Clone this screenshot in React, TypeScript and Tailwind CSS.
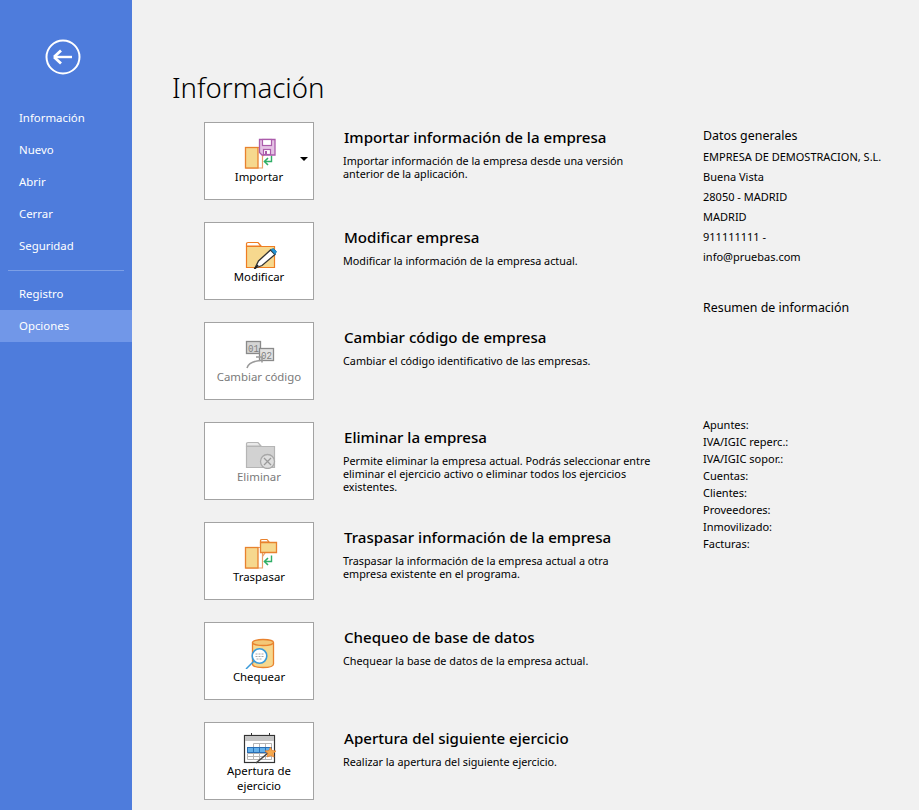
const FONT = "font-['Noto_Sans','Open_Sans',sans-serif]";

function BackIcon() {
  return (
    <svg width="36" height="36" viewBox="0 0 36 36" fill="none">
      <circle cx="18" cy="18" r="16.5" stroke="white" strokeWidth="2" />
      <path d="M10 18H27" stroke="white" strokeWidth="2.4" />
      <path d="M9 18L16 11.5M9 18L16 24.5" stroke="white" strokeWidth="2.8" />
    </svg>
  );
}

function DocBack() {
  return (
    <>
      <path d="M22.5 10.5H27.5V19.5L31 14.5M27.5 19.5V31H10.5" fill="none" stroke="#e8a06a" strokeWidth="1.2" />
      <rect x="10.5" y="10.5" width="12.5" height="20.5" fill="#f6d88e" stroke="#e8822e" strokeWidth="1.3" />
      <path d="M36.5 18.5V24.5H29.5" fill="none" stroke="#2fae66" strokeWidth="1.4" />
      <path d="M33 21L29.5 24.5L33 28" fill="none" stroke="#2fae66" strokeWidth="1.6" />
    </>
  );
}

function ImportIcon() {
  return (
    <svg width="48" height="32" viewBox="0 0 48 32">
      <DocBack />
      <path d="M24.5 2.5H40V18H27L24.5 15.5Z" fill="#e4c2e4" stroke="#ab5cab" strokeWidth="1.3" />
      <rect x="27.5" y="2.5" width="9" height="6" fill="white" stroke="#ab5cab" strokeWidth="1.2" />
      <rect x="28.5" y="12.5" width="7" height="5" fill="white" stroke="#ab5cab" strokeWidth="1.2" />
      <rect x="30" y="14" width="2" height="3" fill="#ab5cab" />
    </svg>
  );
}

function ModifyIcon() {
  return (
    <svg width="48" height="32" viewBox="0 0 48 32">
      <path d="M11.5 9V6.5Q11.5 5.5 13 5.5H23L26 9Z" fill="white" stroke="#ef7d22" strokeWidth="1.2" />
      <path d="M11.5 9.5H39.5V30.5H11.5Z" fill="#f6d88e" stroke="#ef7d22" strokeWidth="1.2" />
      <path d="M20 31L23.5 24L35.5 13L40 17.5L27 28.5Z" fill="white" stroke="#333" strokeWidth="1.3" />
      <path d="M36 12.5L38.5 11.5L41.5 14.5L40 17.5Z" fill="#1f93d6" stroke="#1876ad" strokeWidth="0.8" />
      <path d="M19.5 32L23 28" stroke="#222" strokeWidth="1.6" />
    </svg>
  );
}

function CodeIcon() {
  return (
    <svg width="48" height="32" viewBox="0 0 48 32">
      <rect x="11.5" y="4.5" width="14" height="12" fill="#d5d5d5" stroke="#8a8a8a" strokeWidth="1.3" />
      <rect x="24.5" y="11.5" width="14" height="12" fill="#e2e2e2" stroke="#8a8a8a" strokeWidth="1.3" />
      <text x="13" y="14.5" fontSize="11" fontFamily="Liberation Mono, monospace" fill="#7f7f7f" textLength="11" lengthAdjust="spacingAndGlyphs">01</text>
      <text x="26" y="21.5" fontSize="11" fontFamily="Liberation Mono, monospace" fill="#7f7f7f" textLength="11" lengthAdjust="spacingAndGlyphs">02</text>
      <path d="M12 31Q14 24.5 25.5 23.5" fill="none" stroke="#9a9a9a" strokeWidth="1.6" />
      <path d="M21 20H27V25.5" fill="none" stroke="#9a9a9a" strokeWidth="1.6" />
    </svg>
  );
}

function DeleteIcon() {
  return (
    <svg width="48" height="32" viewBox="0 0 48 32">
      <path d="M11.5 9V6.5Q11.5 5.5 13 5.5H23L26 9Z" fill="#e9e9e9" stroke="#b5b5b5" strokeWidth="1.2" />
      <path d="M11.5 9.5H39.5V30.5H11.5Z" fill="#d2d2d2" stroke="#b5b5b5" strokeWidth="1.2" />
      <circle cx="32.5" cy="24.5" r="7" fill="#dedede" stroke="#a8a8a8" strokeWidth="1.3" />
      <path d="M29 21L36 28M36 21L29 28" stroke="#9a9a9a" strokeWidth="1.3" />
    </svg>
  );
}

function TransferIcon() {
  return (
    <svg width="48" height="32" viewBox="0 0 48 32">
      <DocBack />
      <path d="M25.5 5V3.5Q25.5 2.5 27 2.5H32L34 5Z" fill="white" stroke="#e8822e" strokeWidth="1.2" />
      <path d="M25.5 5.5H41.5V15.5H25.5Z" fill="#f6d88e" stroke="#e8822e" strokeWidth="1.3" />
    </svg>
  );
}

function CheckIcon() {
  return (
    <svg width="48" height="32" viewBox="0 0 48 32">
      <path d="M17.5 5.5V27Q17.5 30.5 28 30.5Q38.5 30.5 38.5 27V5.5" fill="#f6d88e" stroke="#e8822e" strokeWidth="1.3" />
      <ellipse cx="28" cy="5.5" rx="10.5" ry="3" fill="#f3c878" stroke="#e8822e" strokeWidth="1.3" />
      <path d="M11 32L19 24" stroke="#3a9ad9" strokeWidth="1.5" />
      <circle cx="24.5" cy="19" r="7.3" fill="white" stroke="#3a9ad9" strokeWidth="1.6" />
      <path d="M20.5 17H28.5M20.5 19.5H28.5M21.5 22H27.5" stroke="#a8a8a8" strokeWidth="1" strokeDasharray="2 1" />
    </svg>
  );
}

function CalendarIcon() {
  return (
    <svg width="48" height="32" viewBox="0 0 48 32">
      <rect x="9.5" y="3.5" width="30" height="27" fill="white" stroke="#333" strokeWidth="1.2" />
      <rect x="10" y="4" width="29" height="5" fill="#c4c4c4" />
      <path d="M16.5 1V4M34.5 1V4" stroke="#333" />
      <path d="M18.5 11.5H36.5V27.5H18.5M12.5 21.5H36.5M12.5 21.5V27.5H18.5M18.5 11.5V27.5M24.5 11.5V27.5M30.5 11.5V27.5M36.5 11.5V27.5M12.5 24.5H36.5" fill="none" stroke="#b5b5b5" />
      <rect x="12.5" y="15.5" width="24" height="5" fill="#63b0ea" stroke="#2a6fb5" />
      <path d="M18.5 15.5V20.5M24.5 15.5V20.5M30.5 15.5V20.5" stroke="#2a6fb5" />
      <path d="M21 31L33 21" stroke="#444" strokeWidth="1.6" />
      <path d="M35.5 15L37 18.5L41 19L38 21.5L39 25L35.5 23.5L32 25L33 21.5L30 19L34 18.5Z" fill="#f4a94e" stroke="#ea7d25" strokeWidth="0.7" />
    </svg>
  );
}

const nav = ["Información", "Nuevo", "Abrir", "Cerrar", "Seguridad"];

const actions = [
  { icon: <ImportIcon />, label: "Importar", title: "Importar información de la empresa", desc: "Importar información de la empresa desde una versión anterior de la aplicación.", menu: true },
  { icon: <ModifyIcon />, label: "Modificar", title: "Modificar empresa", desc: "Modificar la información de la empresa actual." },
  { icon: <CodeIcon />, label: "Cambiar código", title: "Cambiar código de empresa", desc: "Cambiar el código identificativo de las empresas.", disabled: true },
  { icon: <DeleteIcon />, label: "Eliminar", title: "Eliminar la empresa", desc: "Permite eliminar la empresa actual. Podrás seleccionar entre eliminar el ejercicio activo o eliminar todos los ejercicios existentes.", disabled: true },
  { icon: <TransferIcon />, label: "Traspasar", title: "Traspasar información de la empresa", desc: "Traspasar la información de la empresa actual a otra empresa existente en el programa." },
  { icon: <CheckIcon />, label: "Chequear", title: "Chequeo de base de datos", desc: "Chequear la base de datos de la empresa actual." },
  { icon: <CalendarIcon />, label: "Apertura de ejercicio", title: "Apertura del siguiente ejercicio", desc: "Realizar la apertura del siguiente ejercicio.", tall: true },
];

const general = ["EMPRESA DE DEMOSTRACION, S.L.", "Buena Vista", "28050 - MADRID", "MADRID", "911111111 -", "info@pruebas.com"];
const summary = ["Apuntes:", "IVA/IGIC reperc.:", "IVA/IGIC sopor.:", "Cuentas:", "Clientes:", "Proveedores:", "Inmovilizado:", "Facturas:"];

export default function App() {
  return (
    <div className={`flex h-[810px] w-[919px] overflow-hidden bg-[#f1f1f1] text-black ${FONT}`}>
      <aside className="h-full w-[132px] shrink-0 bg-[#4e7cdc] text-[11.4px] text-white">
        <div className="flex h-[102px] items-start pl-[45px] pt-[39px]">
          <BackIcon />
        </div>
        {nav.map((item) => (
          <div key={item} className="flex h-8 items-center pl-[19px]">{item}</div>
        ))}
        <div className="mx-2 mb-[7px] mt-2 h-px bg-[#7c9fe6]" />
        <div className="flex h-8 items-center pl-[19px]">Registro</div>
        <div className="flex h-8 items-center bg-[#7197e8] pl-[19px]">Opciones</div>
      </aside>

      <main className="flex-1 pl-10 pt-[68px]">
        <h1 className="h-[54px] text-[27.6px] font-light leading-[39px]">Información</h1>
        <div className="flex">
          <div className="ml-8 flex w-[499px] flex-col gap-[22px]">
            {actions.map((a) => (
              <div key={a.title} className="flex h-[78px]">
                <div className={`relative flex h-[78px] w-[110px] shrink-0 flex-col items-center border border-[#a3a3a3] bg-white text-[11.4px] leading-[15px] ${a.tall ? "pt-[9px]" : "pt-[14px]"} ${a.disabled ? "text-[#7a7a7a]" : ""}`}>
                  {a.icon}
                  <span className={`block w-[90px] text-center ${a.tall ? "-mt-px" : ""}`}>{a.label}</span>
                  {a.menu && <span className="absolute right-[5px] top-[34px] h-0 w-0 border-x-[4px] border-t-[4px] border-x-transparent border-t-black" />}
                </div>
                <div className="ml-[30px]">
                  <div className={`text-[15.1px] font-medium leading-[22px] ${a.tall ? "mt-[5px]" : "mt-1"}`}>{a.title}</div>
                  <p className="-ml-px mt-[6px] w-[309px] text-[10.8px] leading-[13px]">{a.desc}</p>
                </div>
              </div>
            ))}
          </div>
          <div className="text-[11px]">
            <div className="h-[25px] text-[12.4px] leading-[28px]">Datos generales</div>
            {general.map((line) => (
              <div key={line} className="flex h-5 items-center">{line}</div>
            ))}
            <div className="mt-[31px] h-[119px] text-[12.4px] leading-[20px]">Resumen de información</div>
            {summary.map((line) => (
              <div key={line} className="flex h-[17px] items-center">{line}</div>
            ))}
          </div>
        </div>
      </main>
    </div>
  );
}
